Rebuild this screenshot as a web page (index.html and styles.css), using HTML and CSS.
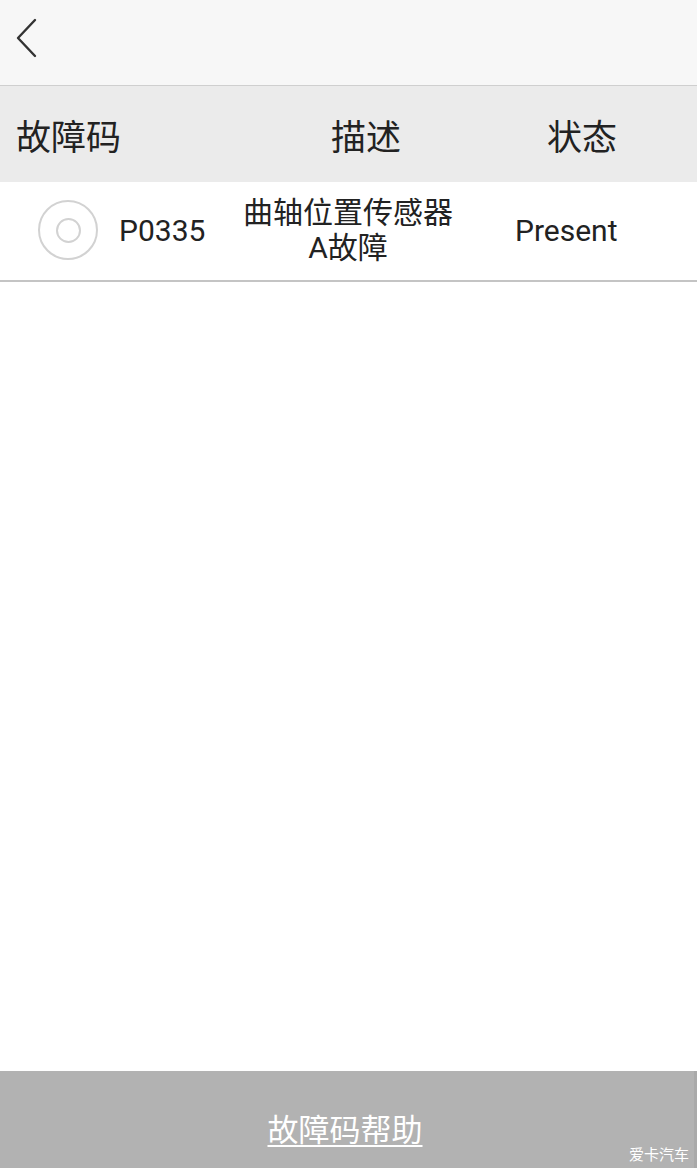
FILE: index.html
```html
<!DOCTYPE html>
<html lang="zh-CN">
<head>
<meta charset="utf-8">
<title>故障码</title>
<link rel="stylesheet" href="styles.css">
</head>
<body>
<div class="app">
  <header class="topbar">
    <svg class="back" width="24" height="40" viewBox="0 0 24 40" aria-hidden="true">
      <path d="M20 2 L3 20 L20 38" fill="none" stroke="#333" stroke-width="2.4" stroke-linecap="round" stroke-linejoin="round"/>
    </svg>
  </header>
  <div class="thead">
    <div class="th th-code">故障码</div>
    <div class="th th-desc">描述</div>
    <div class="th th-state">状态</div>
  </div>
  <div class="trow">
    <span class="radio"><span class="radio-dot"></span></span>
    <span class="td td-code">P0335</span>
    <span class="td td-desc">曲轴位置传感器<br>A故障</span>
    <span class="td td-state">Present</span>
  </div>
  <main class="empty"></main>
  <footer class="bottombar">
    <span class="help">故障码帮助</span>
    <span class="watermark">爱卡汽车</span>
  </footer>
</div>
</body>
</html>
```
FILE: styles.css
```css
* { box-sizing: border-box; }
html, body {
  margin: 0;
  padding: 0;
  background: #ffffff;
}
body {
  font-family: Roboto, "Noto Sans CJK SC", "Noto Sans", sans-serif;
  color: #222222;
}
.app {
  width: 697px;
  height: 1168px;
  display: flex;
  flex-direction: column;
  overflow: hidden;
}
.topbar {
  height: 86px;
  flex: none;
  background: #f7f7f7;
  border-bottom: 1px solid #cfcfcf;
  display: flex;
  align-items: flex-start;
  padding: 18px 0 0 15px;
}
.back { display: block; }
.thead {
  height: 96px;
  flex: none;
  background: #ebebeb;
  display: flex;
  align-items: center;
  font-family: "Noto Sans CJK SC", sans-serif;
  font-size: 35px;
  color: #222;
}
.th { line-height: 40px; padding-top: 2px; }
.th-code { width: 331px; padding-left: 16px; }
.th-desc { width: 216px; }
.th-state { flex: 1; }
.trow {
  height: 100px;
  flex: none;
  background: #ffffff;
  border-bottom: 2px solid #c4c4c4;
  box-shadow: 0 1px 1px rgba(0,0,0,0.08);
  display: flex;
  align-items: center;
  padding-left: 38px;
  padding-bottom: 2px;
}
.radio {
  width: 60px;
  height: 60px;
  border: 2px solid #d2d2d2;
  border-radius: 50%;
  display: flex;
  align-items: center;
  justify-content: center;
  flex: none;
}
.radio-dot {
  width: 25px;
  height: 25px;
  border: 2px solid #d2d2d2;
  border-radius: 50%;
}
.td { font-size: 30px; }
.td-code { margin-left: 21px; width: 90px; }
.td-desc {
  width: 240px;
  margin-left: 19px;
  text-align: center;
  line-height: 35px;
  font-family: Roboto, "Noto Sans CJK SC", sans-serif;
}
.td-state { margin-left: 47px; }
.empty { flex: 1; background: #ffffff; }
.bottombar {
  height: 97px;
  flex: none;
  background: #b2b2b2;
  border-right: 3px solid #a9a9a9;
  position: relative;
  display: flex;
  align-items: center;
  justify-content: center;
  padding-top: 16px;
}
.help {
  font-family: "Noto Sans CJK SC", sans-serif;
  font-size: 31px;
  color: #ffffff;
  text-decoration: underline;
  text-decoration-thickness: 2px;
  text-underline-offset: 4px;
  margin-right: 4px;
}
.watermark {
  position: absolute;
  right: 5px;
  bottom: 4px;
  font-family: "Noto Sans CJK SC", sans-serif;
  font-size: 15px;
  color: #ffffff;
  line-height: 20px;
}
```
